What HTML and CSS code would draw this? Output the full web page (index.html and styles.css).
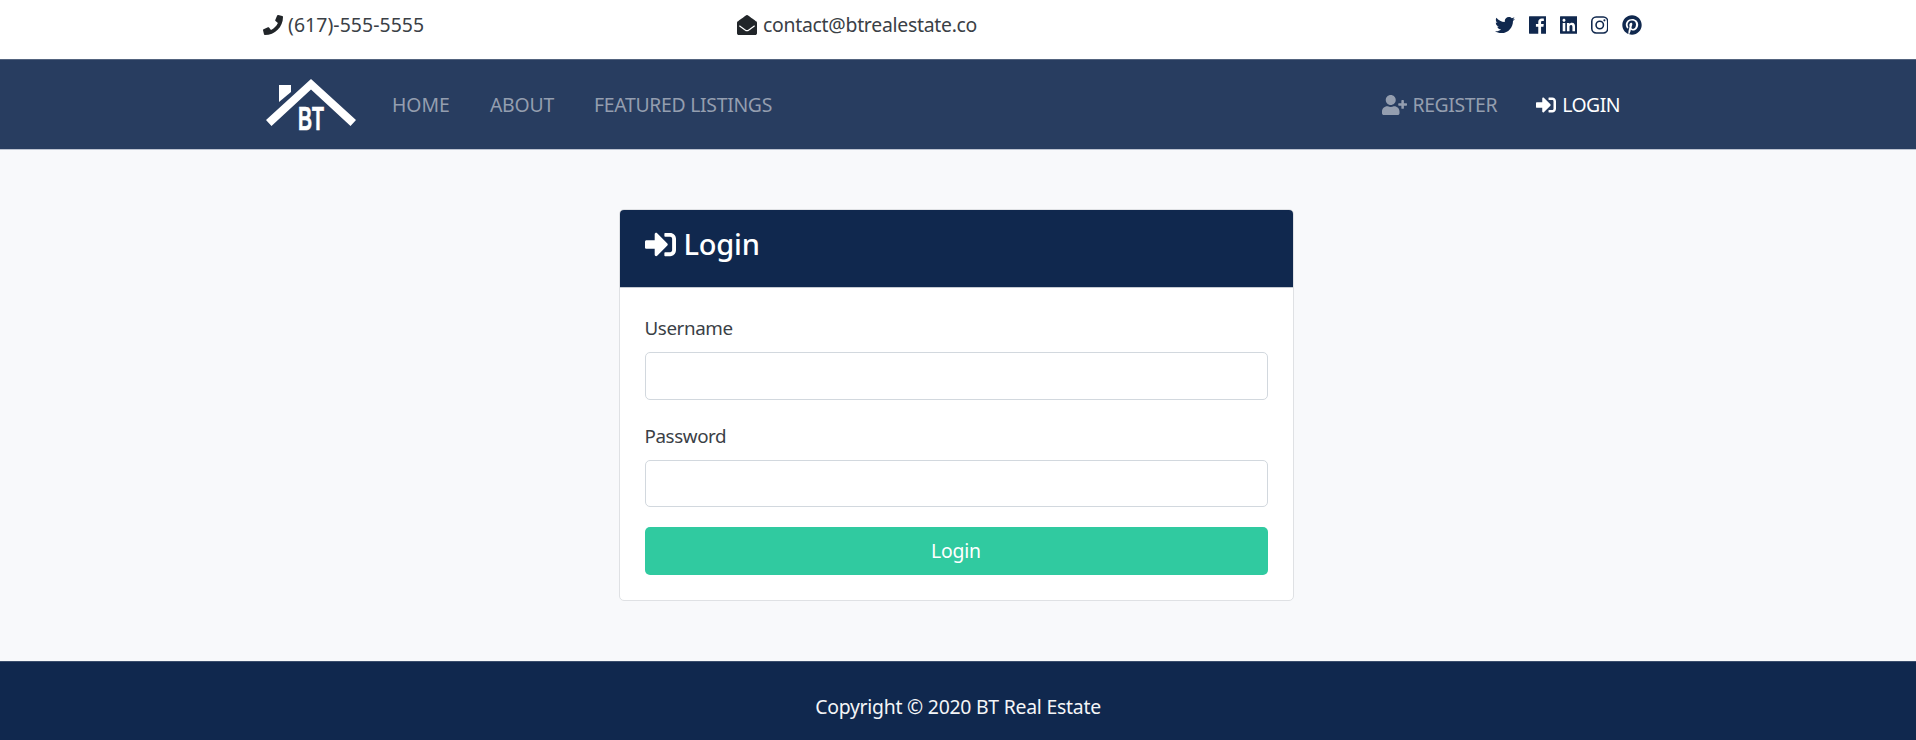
FILE: index.html
```html
<!DOCTYPE html>
<html lang="en">
<head>
<meta charset="utf-8">
<title>BT Real Estate | Login</title>
<link rel="stylesheet" href="styles.css">
</head>
<body>
<section class="topbar">
  <div class="container topbar-row">
    <div class="phone"><svg class="icon" viewBox="0 0 512 512"><path d="M493.4 24.6l-104-24c-11.3-2.6-22.9 3.3-27.500 13.900l-48 112c-4.200 9.800-1.400 21.300 6.900 28l60.600 49.600c-36 76.700-98.900 140.500-177.200 177.200l-49.600-60.600c-6.800-8.300-18.200-11.100-28-6.900l-112 48C3.900 366.500-2 378.100.6 389.400l24 104C27.100 504.200 36.700 512 48 512c256.100 0 464-207.500 464-464 0-11.200-7.700-20.900-18.600-23.400z"/></svg><span class="t-phone">(617)-555-5555</span></div>
    <div class="mail"><svg class="icon" viewBox="0 0 512 512"><path d="M512 464c0 26.500-21.500 48-48 48H48c-26.500 0-48-21.500-48-48V200.700c0-14.800 6.700-28.600 18.300-37.700 24.900-19.500 45.400-35.100 164.200-121.300C199.400 29.200 232.800-.4 256 0c23.200-.4 56.600 29.200 73.400 41.700 118.900 86.200 139.300 101.900 164.300 121.300 11.600 9.100 18.300 22.900 18.300 37.700V464zm-65.700-196.600c-2.600-3.800-7.800-4.600-11.300-1.800-22.900 17.900-55.500 42.700-105.600 79-16.800 12.300-50.200 41.800-73.400 41.400-23.200.4-56.600-29.200-73.400-41.400-50.100-36.300-82.700-61.100-105.600-79-3.600-2.800-8.700-2-11.300 1.800l-9.100 13.200c-2.400 3.500-1.700 8.200 1.700 10.900 22.900 17.900 55.600 42.800 105.200 78.800 16.900 12.300 53.700 48.100 92.500 47.700 38.700.4 75.500-35.300 92.500-47.700 49.600-36 82.300-60.900 105.200-78.800 3.400-2.600 4.100-7.400 1.700-10.900z"/></svg><span class="t-mail">contact@btrealestate.co</span></div>
    <div class="social">
      <svg class="icon" viewBox="0 0 512 512"><path d="M459.370 151.716c.325 4.548.325 9.097.325 13.645 0 138.720-105.583 298.558-298.558 298.558-59.452 0-114.680-17.219-161.137-47.106 8.447.974 16.568 1.299 25.340 1.299 49.055 0 94.213-16.568 130.274-44.832-46.132-.975-84.792-31.188-98.112-72.772 6.498.974 12.995 1.624 19.818 1.624 9.421 0 18.843-1.300 27.614-3.573-48.081-9.747-84.143-51.980-84.143-102.985v-1.299c13.969 7.797 30.214 12.670 47.431 13.319-28.264-18.843-46.781-51.005-46.781-87.391 0-19.492 5.197-37.360 14.294-52.954 51.655 63.675 129.300 105.258 216.365 109.807-1.624-7.797-2.599-15.918-2.599-24.040 0-57.828 46.782-104.934 104.934-104.934 30.213 0 57.502 12.670 76.670 33.137 23.715-4.548 46.456-13.320 66.599-25.340-7.798 24.366-24.366 44.833-46.132 57.827 21.117-2.273 41.584-8.122 60.426-16.243-14.292 20.791-32.161 39.308-52.628 54.253z"/></svg>
      <svg class="icon narrow" viewBox="0 0 448 512"><path d="M448 44v424c0 6-6 12-12 12H309V302h60l9-69h-69v-44c0-20 6-34 34-34h37V93c-6-1-28-3-54-3-53 0-89 32-89 92v51h-60v69h60v178H12c-6 0-12-6-12-12V44c0-6 6-12 12-12h424c6 0 12 6 12 12z"/></svg>
      <svg class="icon narrow" viewBox="0 0 448 512"><path d="M436 32H12C6 32 0 38 0 44v424c0 6 6 12 12 12h424c6 0 12-6 12-12V44c0-6-6-12-12-12zM135.400 416H69V202.200h66.500V416zm-33.200-243c-21.300 0-38.500-17.300-38.500-38.500S80.900 96 102.200 96c21.200 0 38.500 17.300 38.500 38.500 0 21.300-17.200 38.500-38.500 38.500zm282.100 243h-66.400V312c0-24.800-.5-56.700-34.500-56.700-34.600 0-39.900 27-39.900 54.900V416h-66.400V202.200h63.700v29.200h.9c8.900-16.800 30.600-34.500 62.900-34.500 67.200 0 79.700 44.300 79.700 101.900V416z"/></svg>
      <svg class="icon narrow" viewBox="0 0 448 512"><rect class="line" x="20" y="52" width="408" height="408" rx="112"/><circle class="line" cx="224" cy="256" r="95"/><circle cx="343" cy="137" r="27"/></svg>
      <svg class="icon" viewBox="0 0 496 512"><path d="M496 256c0 137-111 248-248 248-25.600 0-50.200-3.900-73.400-11.100 10.100-16.500 25.200-43.500 30.800-65 3-11.600 15.400-59 15.400-59 8.100 15.400 31.700 28.500 56.800 28.500 74.800 0 128.700-68.800 128.700-154.300 0-81.900-66.900-143.200-152.900-143.200-107 0-163.900 71.800-163.900 150.100 0 36.400 19.400 81.700 50.300 96.100 4.700 2.200 7.200 1.200 8.300-3.300.8-3.400 5-20.300 6.900-28.100.6-2.500.3-4.700-1.700-7.100-10.100-12.500-18.300-35.300-18.300-56.600 0-54.700 41.400-107.600 112-107.600 60.900 0 103.600 41.500 103.600 100.900 0 67.100-33.900 113.600-78 113.600-24.300 0-42.600-20.100-36.700-44.800 7-29.500 20.500-61.300 20.500-82.600 0-19-10.200-34.900-31.400-34.900-24.900 0-44.900 25.700-44.900 60.200 0 22 7.400 36.800 7.400 36.800s-24.500 103.800-29 123.200c-5 21.400-3 51.600-.9 71.200C65.400 450.900 0 361.100 0 256 0 119 111 8 248 8s248 111 248 248z"/></svg>
    </div>
  </div>
</section>
<nav class="navbar">
  <div class="container nav-row">
    <svg class="logo" viewBox="0 0 90 52"><path d="M0 41L45 0l45 41-5.500 6L45 10.500 5.500 47z"/><path d="M13 6h12v7L13 23z"/><text x="32" y="50.500" textLength="26" lengthAdjust="spacingAndGlyphs">BT</text></svg>
    <div class="links"><a>HOME</a><a class="t-about">ABOUT</a><a class="t-feat">FEATURED LISTINGS</a></div>
    <div class="account">
      <a><svg class="icon wide" viewBox="0 0 640 512"><path d="M624 208h-64v-64c0-8.800-7.200-16-16-16h-32c-8.800 0-16 7.200-16 16v64h-64c-8.800 0-16 7.200-16 16v32c0 8.800 7.200 16 16 16h64v64c0 8.800 7.200 16 16 16h32c8.800 0 16-7.200 16-16v-64h64c8.800 0 16-7.200 16-16v-32c0-8.800-7.200-16-16-16zm-400 48c70.700 0 128-57.300 128-128S294.700 0 224 0 96 57.300 96 128s57.300 128 128 128zm89.600 32h-16.700c-22.200 10.200-46.900 16-72.900 16s-50.600-5.800-72.900-16h-16.700C60.200 288 0 348.200 0 422.400V464c0 26.500 21.500 48 48 48h352c26.500 0 48-21.500 48-48v-41.600c0-74.200-60.200-134.400-134.400-134.400z"/></svg><span class="t-reg">REGISTER</span></a>
      <a class="active"><svg class="icon" viewBox="0 0 512 512"><path d="M416 448h-84c-6.600 0-12-5.400-12-12v-40c0-6.600 5.400-12 12-12h84c17.700 0 32-14.300 32-32V160c0-17.700-14.300-32-32-32h-84c-6.600 0-12-5.400-12-12V76c0-6.600 5.400-12 12-12h84c53 0 96 43 96 96v192c0 53-43 96-96 96zm-47-209L201 71c-15-15-41-4.500-41 17v96H24c-13.300 0-24 10.700-24 24v96c0 13.300 10.700 24 24 24h136v96c0 21.500 26 32 41 17l168-168c9.300-9.400 9.300-24.600 0-34z"/></svg><span class="t-login">LOGIN</span></a>
    </div>
  </div>
</nav>
<main class="main">
  <form class="card">
    <h1 class="card-header"><svg class="icon big" viewBox="0 0 512 512"><path d="M416 448h-84c-6.600 0-12-5.400-12-12v-40c0-6.600 5.400-12 12-12h84c17.700 0 32-14.300 32-32V160c0-17.700-14.300-32-32-32h-84c-6.600 0-12-5.400-12-12V76c0-6.600 5.400-12 12-12h84c53 0 96 43 96 96v192c0 53-43 96-96 96zm-47-209L201 71c-15-15-41-4.500-41 17v96H24c-13.300 0-24 10.700-24 24v96c0 13.300 10.700 24 24 24h136v96c0 21.500 26 32 41 17l168-168c9.300-9.400 9.300-24.600 0-34z"/></svg><span>Login</span></h1>
    <div class="card-body">
      <label for="username">Username</label>
      <input id="username" type="text">
      <label for="password">Password</label>
      <input id="password" class="password" type="password">
      <button type="button">Login</button>
    </div>
  </form>
</main>
<footer class="footer"><span>Copyright © 2020 BT Real Estate</span></footer>
</body>
</html>
```
FILE: styles.css
```css
* { box-sizing: border-box; }
body {
  margin: 0;
  height: 740px;
  overflow: hidden;
  display: flex;
  flex-direction: column;
  background: #f8f9fb;
  color: #3a4046;
  font: 19.4px/30px "Segoe UI", "Noto Sans", sans-serif;
}
.container { width: 1390px; margin: 0 auto; display: flex; }
.icon { width: 20px; height: 20px; fill: currentColor; flex: none; }
.icon.narrow { width: 17.5px; }
.icon.wide { width: 25px; }
.icon.big { width: 31px; height: 31px; }
.icon .line { fill: none; stroke: currentColor; stroke-width: 40; }
.topbar { height: 59px; background: #fff; }
.topbar-row { padding-top: 10px; }
.topbar-row > div { display: flex; align-items: center; gap: 5px; }
.topbar-row .icon { color: #212529; }
.t-phone { letter-spacing: 0.08px; }
.t-mail { letter-spacing: -0.27px; padding-left: 1px; }
.phone { width: 474px; }
.mail { flex: 1; }
.topbar-row .social { gap: 13.6px; padding-right: 11px; }
.topbar-row .social .icon { color: #10284e; }
.navbar {
  height: 91px;
  background: #283d60;
  border-top: 1px solid #53647f;
  border-bottom: 1px solid #bcc3d1;
}
.nav-row { height: 89px; align-items: center; padding: 1px 33px 0 3px; }
.logo { width: 90px; height: 52px; fill: #fff; overflow: visible; }
.logo text { font: bold 34px "Liberation Sans", Arial, sans-serif; stroke: #fff; stroke-width: 0.6; }
.links { display: flex; flex: 1; padding-left: 36px; gap: 40px; }
.t-about { letter-spacing: -0.2px; }
.t-feat { letter-spacing: -0.3px; }
.t-reg { letter-spacing: -0.4px; }
.t-login { letter-spacing: -0.5px; }
.account { display: flex; gap: 39px; }
.nav-row a { display: flex; align-items: center; gap: 6px; color: #949eaf; }
.nav-row a.active { color: #fff; }
.main { flex: 1; padding-top: 59px; display: flex; justify-content: center; align-items: flex-start; }
.card {
  width: 675px;
  margin-right: 4px;
  height: 392px;
  background: #fff;
  border: 1px solid #dfe1e4;
  border-radius: 5px;
  overflow: hidden;
}
.card-header {
  margin: 0;
  height: 78px;
  padding: 15px 25px 0;
  display: flex;
  gap: 8px;
  background: #10284e;
  border-bottom: 1px solid #c5cad2;
  color: #fff;
  font-size: 29px;
  font-weight: 500;
  line-height: 38px;
  letter-spacing: -0.2px;
}
.card-header .icon { margin-top: 4px; }
.card-body { padding: 25px 25px 0; display: flex; flex-direction: column; }
label { height: 30px; margin-bottom: 9px; font-size: 18.8px; letter-spacing: -0.4px; }
input {
  height: 48px;
  margin-bottom: 21px;
  border: 1px solid #d2d8de;
  border-radius: 5px;
  background: #fff;
}
input.password { height: 47px; margin-bottom: 20px; }
button {
  height: 48px;
  border: 0;
  border-radius: 5px;
  background: #30caa0;
  color: #fff;
  font: inherit;
  letter-spacing: -0.2px;
}
.footer {
  height: 79px;
  background: #10284e;
  border-top: 1px solid #3a4d6c;
  padding-top: 30px;
  color: #f4f5f7;
  text-align: center;
  letter-spacing: -0.24px;
}
```
